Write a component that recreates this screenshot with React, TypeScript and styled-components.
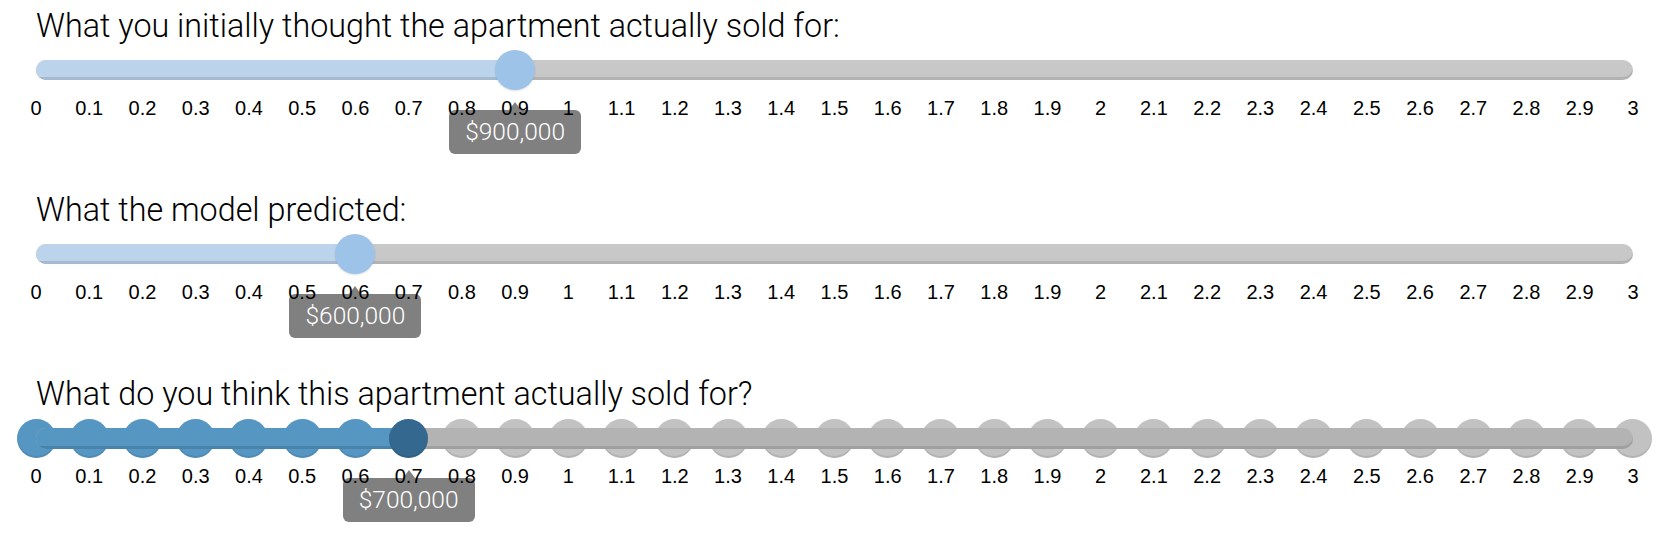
import React from "react";
import styled, {createGlobalStyle} from "styled-components";

const MAX = 3;
const TICKS = Array.from({length: 31}, (_, i) => i / 10);
const STEP_PX = 1597 / 30;

const GlobalStyle = createGlobalStyle`
  html, body {
    margin: 0;
    padding: 0;
    background: #fff;
  }
  body {
    font-family: "Liberation Sans", Arial, sans-serif;
  }
`;

const Page = styled.div`
  width: 1676px;
  box-sizing: border-box;
  padding: 6px 43px 0 36px;
`;

const Section = styled.div`
  height: 184px;
  display: flex;
  flex-direction: column;
`;

const Title = styled.div`
  font-family: Roboto, "Liberation Sans", sans-serif;
  font-weight: 300;
  font-size: 32.3px;
  line-height: 40px;
  color: #000;
  white-space: nowrap;
`;

const RailZone = styled.div`
  position: relative;
  display: grid;
  height: 40px;
  margin-top: 4px;
`;

const Track = styled.div<{ $dots?: boolean }>`
  grid-area: 1 / 1;
  align-self: center;
  z-index: 1;
  height: ${p => p.$dots ? 21 : 20}px;
  border-radius: 10px;
  overflow: hidden;
  background: ${p => p.$dots ? "#b3b3b3" : "#c8c8c8"};
  box-shadow: inset 0 -3px 0 rgba(0, 0, 0, 0.1);
`;

const Fill = styled.div<{ $dots?: boolean }>`
  height: 100%;
  background: ${p => p.$dots ? "#5596c2" : "#bcd4eb"};
  box-shadow: inset 0 -3px 0 rgba(0, 0, 0, 0.12);
`;

const Handle = styled.div`
  position: absolute;
  top: 0;
  width: 40px;
  height: 40px;
  margin-left: -20px;
  border-radius: 50%;
  background: #9dc3e8;
  box-shadow: 0 1px 2px rgba(0, 0, 0, 0.12);
  z-index: 2;
`;

const Tooltip = styled.div`
  position: absolute;
  top: 60px;
  width: 132px;
  height: 44px;
  margin-left: -66px;
  border-radius: 6px;
  background: #808080;
  color: #fff;
  font-family: Roboto, "Liberation Sans", sans-serif;
  font-weight: 300;
  font-size: 24.5px;
  line-height: 44px;
  text-align: center;
  z-index: 1;

  &::before {
    content: "";
    position: absolute;
    left: 50%;
    top: -8px;
    margin-left: -6px;
    border-left: 6px solid transparent;
    border-right: 6px solid transparent;
    border-bottom: 8px solid #808080;
  }
`;

const TickRow = styled.div`
  position: relative;
  z-index: 2;
  display: grid;
  grid-template-columns: repeat(31, 1fr);
  margin: 7px ${-STEP_PX / 2}px 0;
  font-size: 20px;
  line-height: 22px;
  color: #000;
  text-align: center;
`;

const DotRow = styled.div`
  grid-area: 1 / 1;
  display: grid;
  grid-template-columns: repeat(31, 1fr);
  justify-items: center;
  align-items: center;
  margin: 0 ${-STEP_PX / 2}px;
`;

const Dot = styled.div<{ $tone: "on" | "off" | "current" }>`
  width: 39px;
  height: 39px;
  border-radius: 50%;
  background: ${p => p.$tone === "current" ? "#34688f" : p.$tone === "on" ? "#5596c2" : "#c2c2c2"};
  box-shadow: inset 0 -2px 0 rgba(0, 0, 0, 0.08);
  ${p => p.$tone === "current" ? "position: relative; z-index: 2;" : ""}
`;

const money = (v: number) => "$" + Math.round(v * 1000000).toLocaleString("en-US");

const Ticks = () => (
  <TickRow>
    {TICKS.map(t => <span key={t}>{t}</span>)}
  </TickRow>
);

const PlainSlider = ({label, value}: { label: string, value: number }) => {
  const pct = `${(value / MAX) * 100}%`;
  return (
    <Section>
      <Title>{label}</Title>
      <RailZone>
        <Track>
          <Fill style={{width: pct}}/>
        </Track>
        <Handle style={{left: pct}}/>
        <Tooltip style={{left: pct}}>{money(value)}</Tooltip>
      </RailZone>
      <Ticks/>
    </Section>
  );
};

const DotSlider = ({label, value}: { label: string, value: number }) => {
  const pct = `${(value / MAX) * 100}%`;
  const current = Math.round(value * 10);
  return (
    <Section>
      <Title>{label}</Title>
      <RailZone>
        <DotRow>
          {TICKS.map((t, i) => (
            <Dot key={t} $tone={i === current ? "current" : i < current ? "on" : "off"}/>
          ))}
        </DotRow>
        <Track $dots>
          <Fill $dots style={{width: pct}}/>
        </Track>
        <Tooltip style={{left: pct}}>{money(value)}</Tooltip>
      </RailZone>
      <Ticks/>
    </Section>
  );
};

export default function App() {
  return (
    <>
      <GlobalStyle/>
      <Page>
        <PlainSlider label="What you initially thought the apartment actually sold for:" value={0.9}/>
        <PlainSlider label="What the model predicted:" value={0.6}/>
        <DotSlider label="What do you think this apartment actually sold for?" value={0.7}/>
      </Page>
    </>
  );
}
